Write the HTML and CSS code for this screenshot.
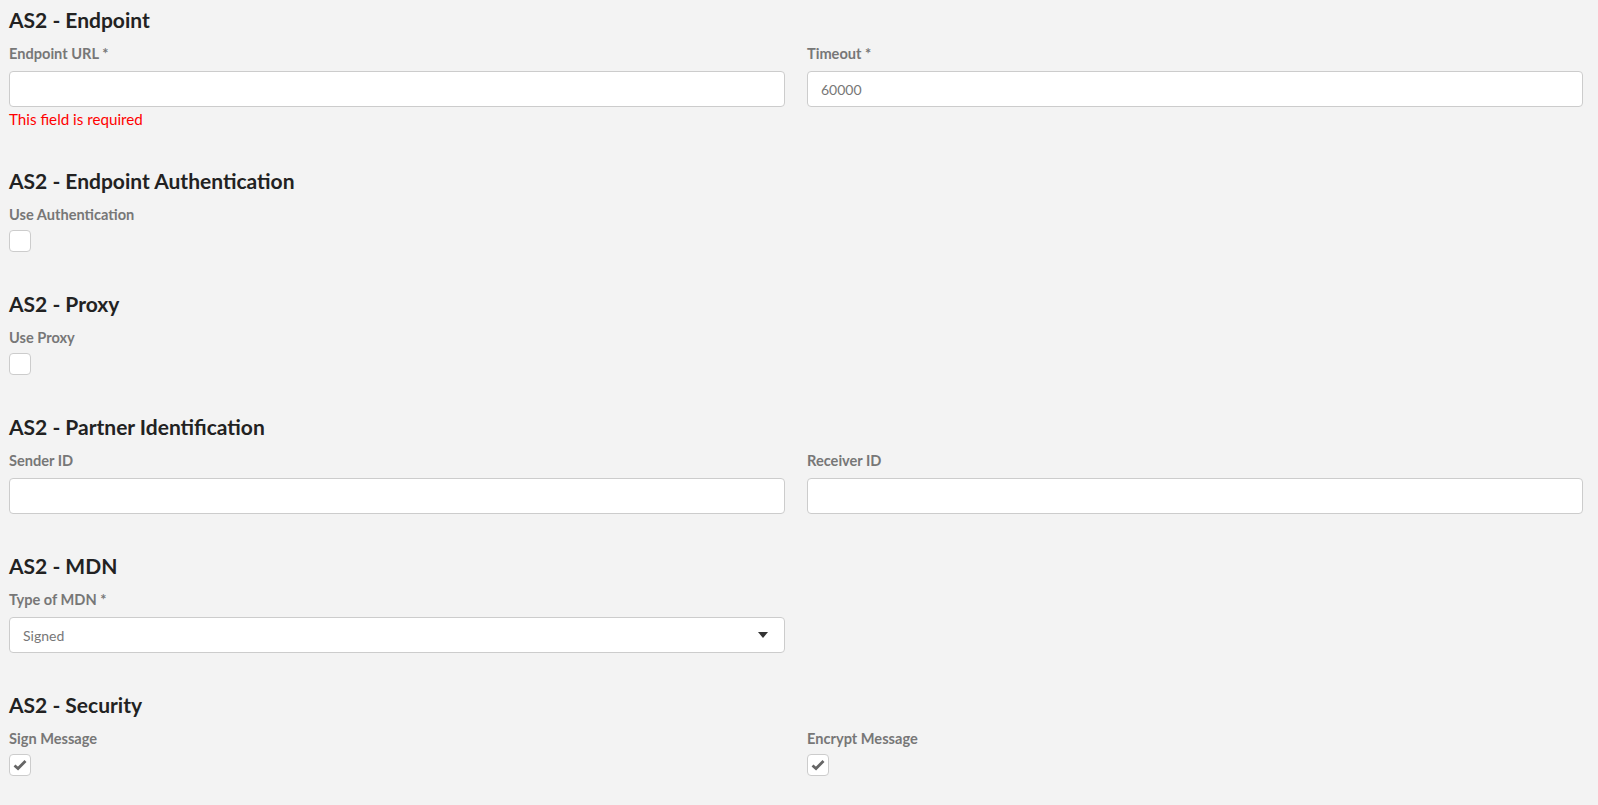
FILE: index.html
```html
<!DOCTYPE html>
<html lang="en">
<head>
    <meta charset="UTF-8">
    <title>AS2 Settings</title>
    <link rel="stylesheet" href="styles.css">
</head>
<body>
    <div class="page">

        <section class="section">
            <h2>AS2 - Endpoint</h2>
            <div class="row">
                <div class="field">
                    <label for="endpointUrl">Endpoint URL *</label>
                    <input type="text" id="endpointUrl" class="input">
                    <div class="error">This field is required</div>
                </div>
                <div class="field">
                    <label for="timeout">Timeout *</label>
                    <input type="text" id="timeout" class="input" value="60000">
                </div>
            </div>
        </section>

        <section class="section">
            <h2>AS2 - Endpoint Authentication</h2>
            <div class="field field-check">
                <label>Use Authentication</label>
                <span class="check"></span>
            </div>
        </section>

        <section class="section">
            <h2>AS2 - Proxy</h2>
            <div class="field field-check">
                <label>Use Proxy</label>
                <span class="check"></span>
            </div>
        </section>

        <section class="section">
            <h2>AS2 - Partner Identification</h2>
            <div class="row">
                <div class="field">
                    <label for="senderId">Sender ID</label>
                    <input type="text" id="senderId" class="input">
                </div>
                <div class="field">
                    <label for="receiverId">Receiver ID</label>
                    <input type="text" id="receiverId" class="input">
                </div>
            </div>
        </section>

        <section class="section">
            <h2>AS2 - MDN</h2>
            <div class="row">
                <div class="field">
                    <label>Type of MDN *</label>
                    <div class="select">
                        <span>Signed</span>
                        <span class="caret"></span>
                    </div>
                </div>
            </div>
        </section>

        <section class="section">
            <h2>AS2 - Security</h2>
            <div class="row">
                <div class="field field-check">
                    <label>Sign Message</label>
                    <span class="check">
                        <svg width="14" height="12" viewBox="0 0 14 12"><polyline points="1.5,6.5 5,9.5 12.5,2" fill="none" stroke="#666" stroke-width="2.8"/></svg>
                    </span>
                </div>
                <div class="field field-check">
                    <label>Encrypt Message</label>
                    <span class="check">
                        <svg width="14" height="12" viewBox="0 0 14 12"><polyline points="1.5,6.5 5,9.5 12.5,2" fill="none" stroke="#666" stroke-width="2.8"/></svg>
                    </span>
                </div>
            </div>
        </section>

    </div>
</body>
</html>
```

FILE: styles.css
```css
body {
    margin: 0;
    background: #f3f3f3;
    font-family: Lato, 'Noto Sans', Arial, sans-serif;
    color: #222;
}
.page {
    padding: 8px 15px 0 9px;
}
.section {
    margin-bottom: 40px;
}
.section h2 {
    margin: 0 0 12px;
    font-size: 21px;
    line-height: 24px;
    font-weight: 700;
    color: #222;
}
.row {
    display: grid;
    grid-template-columns: 1fr 1fr;
    column-gap: 22px;
}
.field label {
    display: block;
    font-size: 14.6px;
    line-height: 20px;
    font-weight: 700;
    color: #777;
    margin-bottom: 7px;
}
.field-check label {
    margin-bottom: 5px;
}
.input {
    display: block;
    width: 100%;
    height: 36px;
    box-sizing: border-box;
    border: 1px solid #ccc;
    border-radius: 4px;
    background: #fff;
    padding: 0 13px;
    font-family: inherit;
    font-size: 14px;
    color: #777;
    outline: none;
}
.error {
    margin-top: 2px;
    font-size: 15.2px;
    line-height: 20px;
    color: #f00;
}
.check {
    display: flex;
    align-items: center;
    justify-content: center;
    width: 22px;
    height: 22px;
    box-sizing: border-box;
    border: 1px solid #ccc;
    border-radius: 4px;
    background: #fff;
}
.select {
    display: flex;
    align-items: center;
    justify-content: space-between;
    height: 36px;
    box-sizing: border-box;
    border: 1px solid #ccc;
    border-radius: 4px;
    background: #fff;
    padding: 0 16px 0 13px;
    font-size: 14px;
    color: #777;
}
.caret {
    width: 0;
    height: 0;
    border-left: 5px solid transparent;
    border-right: 5px solid transparent;
    border-top: 6px solid #333;
}
```
